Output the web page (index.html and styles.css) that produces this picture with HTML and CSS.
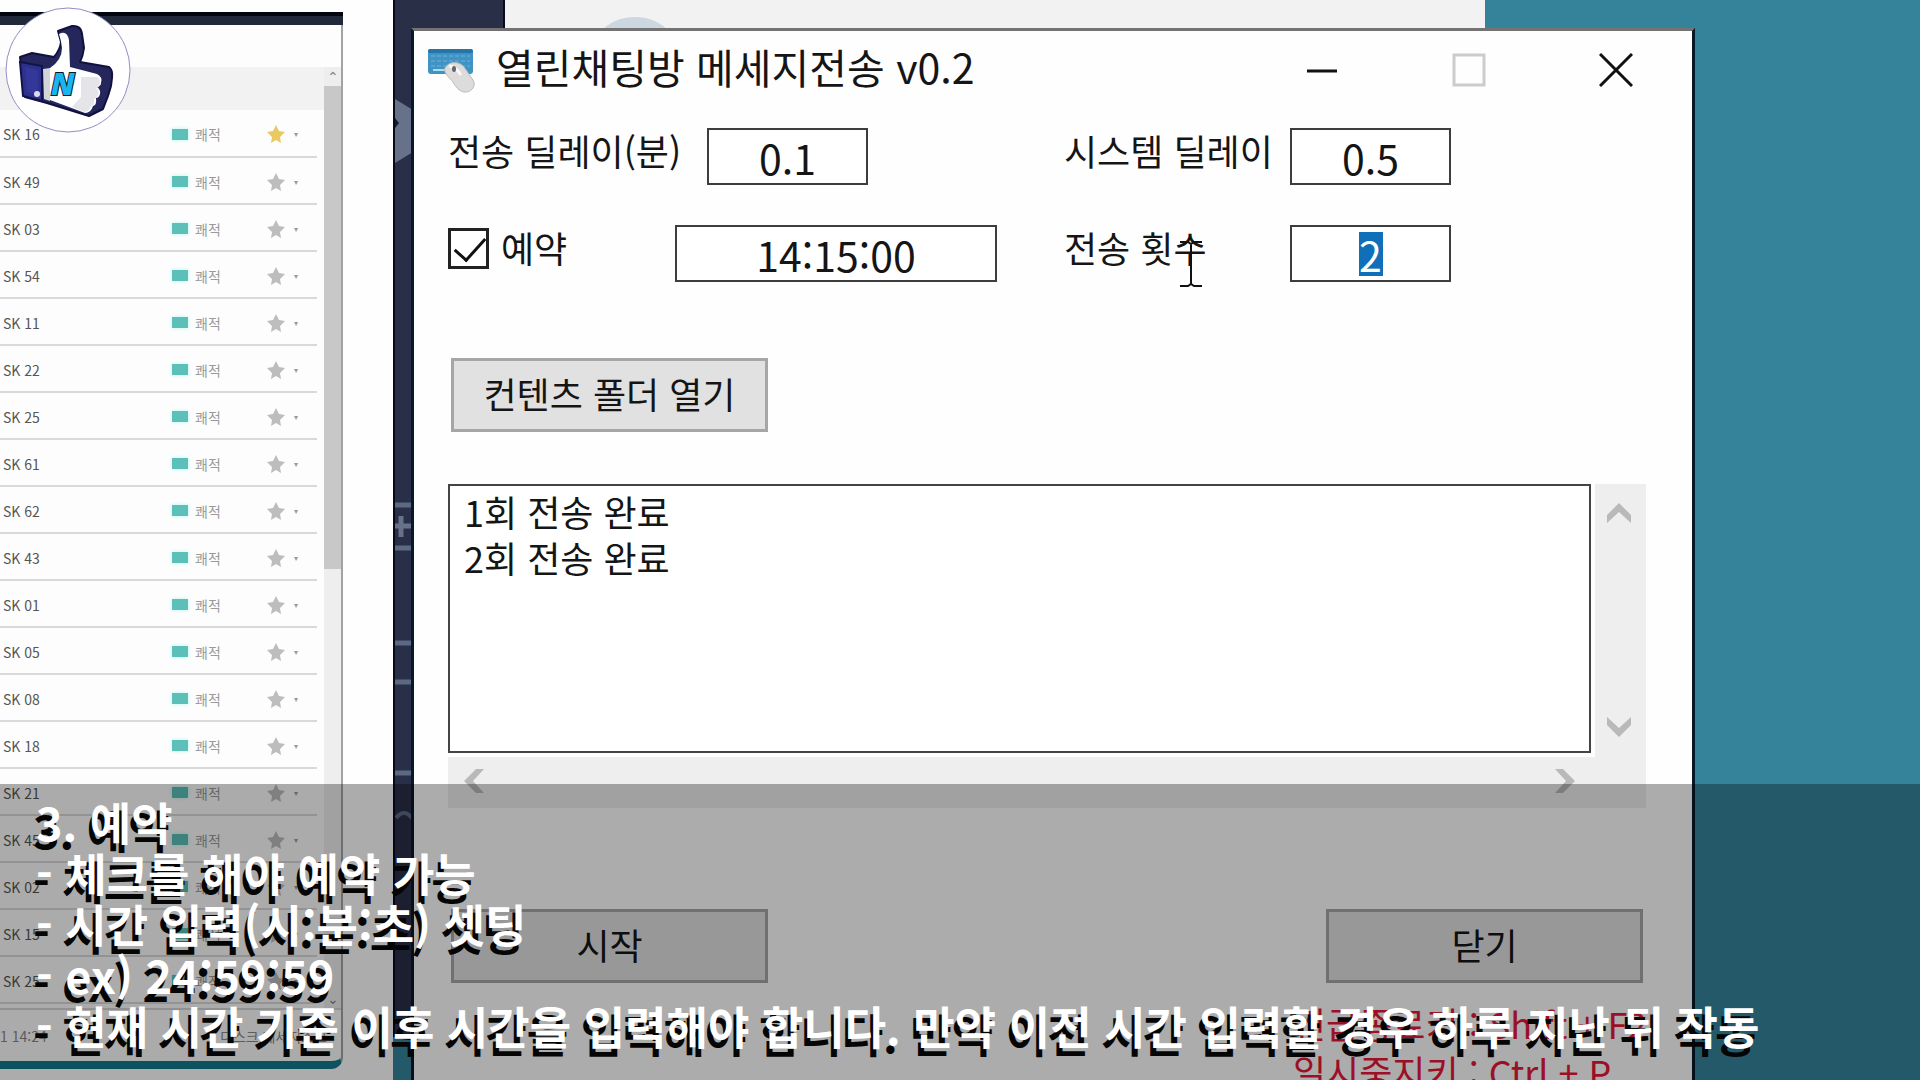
FILE: index.html
```html
<!DOCTYPE html>
<html lang="ko">
<head>
<meta charset="utf-8">
<title>열린채팅방 메세지전송 v0.2</title>
<link rel="stylesheet" href="styles.css">
</head>
<body>
<div class="desktop">
  <div class="page-panel"></div>

  <div class="side-strip">
    <svg class="side-marks" width="20" height="1037" viewBox="0 0 20 1037" aria-hidden="true">
      <path d="M0 99l18 11v42L0 163z" fill="#68718a"/>
      <path d="M0 118l4 5-4 5z" fill="#141a2b"/>
      <path d="M0 505h20M0 548h20M0 643h20M0 682h20M0 773h20" stroke="#5d6883" stroke-width="5"/>
      <path d="M0 526h17M6 516v21" stroke="#68718a" stroke-width="5"/>
      <path d="M1 818q8-10 16 0" fill="none" stroke="#5d6883" stroke-width="4"/>
    </svg>
  </div>

  <div class="top-panel">
    <svg width="80" height="28" viewBox="0 0 80 28" aria-hidden="true"><ellipse cx="40" cy="48" rx="40" ry="31" fill="#ccd7e1"/></svg>
  </div>

  <section class="list-window">
    <div class="list-title"></div>
    <div class="list-toolbar"></div>
    <div class="list-body">
      <div class="list-main">
        <div class="list-header"></div>
        <table class="servers"><tbody id="servers"></tbody></table>
      </div>
      <div class="list-scroll">
        <span>⌃</span>
        <div class="list-thumb"></div>
        <span class="list-down">⌄</span>
      </div>
    </div>
    <div class="list-footer"><span>1 14:24</span><span>디스크 메세지스크</span></div>
  </section>

  <main class="window">
    <header class="titlebar">
      <svg class="app-icon" width="50" height="48" viewBox="0 0 50 48" aria-hidden="true">
        <rect x="2" y="3" width="45" height="25" rx="3" fill="#3f94c5"/>
        <rect x="2" y="3" width="45" height="4" rx="2" fill="#2675a6"/>
        <path d="M5 10h39M5 15h39M5 20h39" stroke="#6fb3d8" stroke-width="1" stroke-dasharray="4 2"/>
        <path d="M7 24h15" stroke="#b1dcef" stroke-width="2"/>
        <path d="M19 22c4-7 14-7 19-1l9 13c4 7-3 13-9 12-5-1-8-5-11-10-3-4-10-9-8-14z" fill="#dedcda" stroke="#bbb" stroke-width="1"/>
        <path d="M23 20c4 0 8 3 12 9" fill="none" stroke="#f8f8f8" stroke-width="3"/>
        <ellipse cx="28" cy="23" rx="2" ry="3" fill="#62676d"/>
      </svg>
      <h1>열린채팅방 메세지전송 v0.2</h1>
      <div class="controls">
        <button type="button" aria-label="최소화"><svg width="34" height="34"><path d="M2 18h30" stroke="#111" stroke-width="3"/></svg></button>
        <button type="button" aria-label="최대화" disabled><svg width="34" height="34"><path d="M2 2h30v30H2z" fill="none" stroke="#ccc" stroke-width="3"/></svg></button>
        <button type="button" aria-label="창 닫기"><svg width="34" height="34"><path d="M1 1l32 32M33 1L1 33" stroke="#111" stroke-width="3"/></svg></button>
      </div>
    </header>

    <form class="content">
      <div class="fields">
        <div class="field">
          <label class="wide-label" for="delay">전송 딜레이(분)</label>
          <input class="box short" id="delay" type="text" value="0.1">
        </div>
        <label for="system">시스템 딜레이</label>
        <input class="box short" id="system" type="text" value="0.5">

        <div class="field">
          <input class="check" id="reserve" type="checkbox" checked>
          <label class="check-label" for="reserve">예약</label>
          <input class="box time" type="text" value="14:15:00" aria-label="예약 시간">
        </div>
        <label for="count">전송 횟수</label>
        <input class="box short selected" id="count" type="text" value="2">
      </div>

      <button class="push" type="button">컨텐츠 폴더 열기</button>

      <div class="log">
        <textarea aria-label="전송 기록" spellcheck="false">1회 전송 완료
2회 전송 완료</textarea>
        <div class="vscroll">
          <svg width="24" height="20"><path d="M0 12L12 0l12 12v8L12 9 0 20z" fill="#b9b9b9"/></svg>
          <svg width="24" height="20"><path d="M0 8l12 12L24 8V0L12 11 0 0z" fill="#b9b9b9"/></svg>
        </div>
        <div class="hscroll">
          <svg width="20" height="24"><path d="M12 0L0 12l12 12h8L9 12 20 0z" fill="#b9b9b9"/></svg>
          <svg width="20" height="24"><path d="M8 0l12 12L8 24H0l11-12L0 0z" fill="#b9b9b9"/></svg>
        </div>
      </div>

      <div class="actions">
        <button class="push" type="button">시작</button>
        <button class="push" type="button">닫기</button>
      </div>
      <p class="hotkeys">긴급종료키 : Shift + F2<br>일시중지키 : Ctrl + P</p>
    </form>
  </main>

  <svg class="cursor" width="24" height="48" viewBox="0 0 24 48" aria-hidden="true"><path d="M1 2h8l3 2 3-2h8M12 4v40M1 46h8l3-2 3 2h8" fill="none" stroke="#111" stroke-width="2"/></svg>

  <div class="caption">
    <p>3. 예약</p>
    <p>- 체크를 해야 예약 가능</p>
    <p>- 시간 입력(시:분:초) 셋팅</p>
    <p>- ex) 24:59:59</p>
    <p>- 현재 시간 기준 이후 시간을 입력해야 합니다. 만약 이전 시간 입력할 경우 하루 지난 뒤 작동</p>
  </div>

  <svg class="logo" width="126" height="126" viewBox="0 0 126 126" role="img" aria-label="N">
    <circle cx="63" cy="63" r="62" fill="#fff" stroke="#8f8fc4" stroke-width="1"/>
    <path d="M53 24l14-5q9-1 10 8l2 14q-1 8-4 14l29 5q4 3 3 11l-1 8-3 10-5 13-14 7-42-13-22-6-5-40 12-4 22 4q6-7 7-15z" fill="#25265c" stroke="#10113e" stroke-width="2" stroke-linejoin="round"/>
    <path d="M15 55l22 4v35l-19-5z" fill="#2e318c" stroke="#11134a" stroke-width="2"/>
    <path d="M20 60l13 3v25l-11-3z" fill="#34379a"/>
    <path d="M38 62l7-1v33l-6-2z" fill="#d3d3da"/>
    <path d="M54 27q8-4 10 6l1 27 27 7q6 3 4 9 0 3-4 4 4 3 3 7-1 4-4 4 1 7-3 8-2 7-8 7l-35-13V61q12-8 12-20-1-8-3-14z" fill="#fff"/>
    <path d="M76 70l16 0q5 4 2 8 0 3-3 3 4 3 2 7-1 3-4 4 1 6-3 7-2 6-7 6l-12-5 9-10z" fill="#e5e5e9"/>
    <circle cx="32" cy="87" r="3" fill="#dadbed"/>
    <text class="logo-letter" x="46" y="88">N</text>
  </svg>
</div>
<script src="list.js"></script>
</body>
</html>
```
FILE: styles.css
```css
* { box-sizing: border-box; }
body {
  margin: 0;
  color: #151515;
  font-family: "Noto Sans CJK KR", "Noto Sans", sans-serif;
}
button, input, textarea { font: inherit; color: inherit; }
h1, p { margin: 0; }

.desktop {
  position: relative;
  height: 100vh;
  overflow: hidden;
  background: #35839b;
}
.page-panel {
  position: absolute;
  inset: 0 auto 0 0;
  width: 393px;
  background: #fefefe;
}
.side-strip {
  position: absolute;
  top: 0;
  left: 393px;
  bottom: 43px;
  width: 112px;
  overflow: hidden;
  background: #282f47;
  border: solid #060a1c;
  border-width: 0 2px;
}
.side-marks { display: block; }
.top-panel {
  position: absolute;
  top: 0;
  left: 505px;
  right: 435px;
  height: 30px;
  padding-left: 90px;
  background: #f2f2f2;
}

/* Server list behind the dialog */
.list-window {
  position: absolute;
  inset: 12px auto 11px 0;
  width: 343px;
  display: flex;
  flex-direction: column;
  background: #fdfdfd;
  border-right: 2px solid #a2a2a4;
  border-bottom: 8px solid #127b8d;
  border-bottom-right-radius: 12px;
  font-size: 14px;
}
.list-title {
  height: 13px;
  margin-right: -2px;
  background: #20293a;
  border-top: 4px solid #02040e;
}
.list-toolbar { height: 42px; }
.list-body {
  flex: 1;
  min-height: 0;
  display: flex;
}
.list-main {
  flex: 1;
  overflow: hidden;
}
.list-header { height: 43px; background: #f2f2f2; }
.servers {
  width: 317px;
  border-collapse: collapse;
  table-layout: fixed;
}
.servers td {
  height: 47px;
  padding: 2px 0 0;
  border-bottom: 2px solid #d9d9d9;
  color: #9a9a9a;
  line-height: 20px;
}
.servers .name { width: 172px; padding-left: 3px; color: #555; }
.servers .signal { width: 23px; }
.servers .signal i {
  display: block;
  width: 16px;
  height: 11px;
  background: #5cc0b9;
  box-shadow: 0 0 4px #b5f5f1;
}
.servers .state { width: 71px; }
.servers .star { width: 28px; }
.servers svg { display: block; fill: #bdbdbd; }
.servers .gold { fill: #e8c964; }
.servers .more { font-size: 8px; }
.list-scroll {
  width: 17px;
  display: flex;
  flex-direction: column;
  align-items: center;
  background: #eee;
  color: #888;
  line-height: 19px;
}
.list-thumb { width: 17px; height: 483px; background: #c8c8c8; }
.list-down { margin-top: auto; }
.list-footer {
  height: 53px;
  padding-right: 14px;
  display: flex;
  justify-content: space-between;
  align-items: center;
  border-top: 2px solid #d5d5d5;
  color: #888;
}

/* Dialog */
.window {
  position: absolute;
  inset: 28px 225px 0 411px;
  overflow: hidden;
  background: #fefefe;
  border: solid #06192a;
  border-width: 3px 3px 0;
  border-top-color: #737373;
}
.titlebar {
  height: 78px;
  padding: 0 3px 0 12px;
  display: flex;
  align-items: center;
}
h1 {
  flex: 1;
  margin-left: 20px;
  font-size: 41px;
  font-weight: 400;
  line-height: 60px;
  padding-bottom: 9px;
}
.controls { display: flex; }
.controls button {
  width: 147px;
  height: 78px;
  padding: 0;
  border: 0;
  background: none;
}
.controls svg { display: block; margin: auto; }
.content {
  padding: 19px 46px 0 34px;
  font-size: 36px;
  font-weight: 400;
  line-height: 44px;
}
.fields {
  display: grid;
  grid-template-columns: 616px 226px 161px;
  row-gap: 40px;
}
.field { display: flex; }
.wide-label { width: 259px; }
.check-label { width: 174px; }
.box {
  height: 57px;
  padding: 0;
  border: 2px solid #3d3d3d;
  border-radius: 0;
  background: #fff;
  font-size: 41px;
  text-align: center;
}
.short { width: 161px; }
.time { width: 322px; }
.selected {
  color: #fff;
  background: linear-gradient(#106fb9, #106fb9) center / 24px 44px no-repeat #fff;
}
.check {
  appearance: none;
  width: 41px;
  height: 41px;
  margin: 3px 12px 0 0;
  border: 3px solid #222;
  background: #fff;
}
.check:checked::before {
  content: "";
  display: block;
  width: 27px;
  height: 14px;
  margin: 6px 0 0 4px;
  border: solid #111;
  border-width: 0 0 3px 3px;
  transform: rotate(-48deg);
}
.push {
  width: 317px;
  height: 74px;
  padding: 0 0 5px;
  border: 3px solid #a6a6a6;
  background: #e1e1e1;
}
.fields + .push { display: block; margin: 76px 0 0 3px; }
.log {
  margin-top: 52px;
  display: grid;
  grid-template-columns: 1fr 51px;
  grid-template-rows: 269px 51px;
  gap: 4px;
}
textarea {
  width: 100%;
  height: 100%;
  padding: 2px 14px;
  border: 2px solid #444;
  background: #fff;
  line-height: 46px;
  resize: none;
  overflow: hidden;
}
.vscroll {
  grid-column: 2;
  grid-row: 1 / 3;
  padding: 19px 4px 71px 0;
  display: flex;
  flex-direction: column;
  justify-content: space-between;
  align-items: center;
  background: #eee;
}
.hscroll {
  grid-column: 1;
  grid-row: 2;
  margin-right: -4px;
  padding: 0 20px 4px 16px;
  display: flex;
  justify-content: space-between;
  align-items: center;
  background: #eee;
}
.actions {
  margin: 101px 3px 0;
  display: flex;
  justify-content: space-between;
}
.hotkeys {
  margin: 16px 0 0 845px;
  color: #e5173a;
  line-height: 48px;
  white-space: nowrap;
}
.cursor { position: absolute; left: 1179px; top: 240px; }

/* Video overlays */
.caption {
  position: absolute;
  inset: auto 0 0 0;
  padding: 12px 36px 29px;
  background: rgba(0, 0, 0, .32);
  color: #fff;
  font-size: 45px;
  font-weight: 700;
  line-height: 51px;
  white-space: nowrap;
  text-shadow: -3px 8px 0 #050505;
}
.logo { position: absolute; left: 5px; top: 7px; }
.logo-letter {
  fill: #19b5f1;
  stroke: #0b1730;
  stroke-width: 2px;
  paint-order: stroke;
  font: italic 900 30px "Open Sans", sans-serif;
}
```
FILE: list.js
```js
const numbers = ['16', '49', '03', '54', '11', '22', '25', '61', '62', '43',
  '01', '05', '08', '18', '21', '45', '02', '15', '25'];
document.getElementById('servers').innerHTML = numbers.map((n, i) => `
  <tr>
    <td class="name">SK ${n}</td>
    <td class="signal"><i></i></td>
    <td class="state">쾌적</td>
    <td class="star"><svg class="${i ? '' : 'gold'}" width="20" height="20" viewBox="0 0 20 20"><path d="M10 1l3 6 6 1-5 5 1 6-5-3-5 3 1-6-5-5 6-1z"/></svg></td>
    <td class="more">▾</td>
  </tr>`).join('');
```
